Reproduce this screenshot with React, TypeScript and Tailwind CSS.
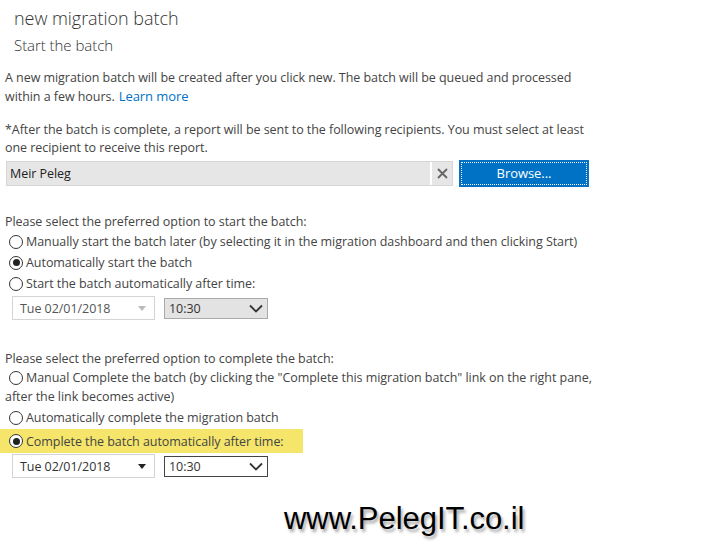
import React from "react"

function Radio({ checked }: { checked?: boolean }) {
  return (
    <span className="mr-[3px] inline-flex h-[14px] w-[14px] shrink-0 items-center justify-center rounded-full border border-[#333] bg-white">
      {checked && <span className="h-[7px] w-[7px] rounded-full bg-[#222]" />}
    </span>
  )
}

function Chevron() {
  return (
    <svg width="14" height="9" viewBox="0 0 14 9" fill="none">
      <path d="M1 1.5 L7 7.5 L13 1.5" stroke="#333" strokeWidth="1.8" />
    </svg>
  )
}

function DateTimeRow({ enabled }: { enabled?: boolean }) {
  return (
    <div className="flex items-center gap-[9px] pl-[12px]">
      <div className="flex h-[24px] w-[143px] items-center justify-between border border-[#d4d4d4] bg-white pl-[7px] pr-[8px]">
        <span className={enabled ? "text-[#333]" : "text-[#555]"}>Tue 02/01/2018</span>
        <svg width="8" height="5" viewBox="0 0 8 5">
          <path d="M0 0 L8 0 L4 5 Z" fill={enabled ? "#222" : "#bbb"} />
        </svg>
      </div>
      <div
        className={
          enabled
            ? "flex h-[21px] w-[104px] items-center justify-between border border-[#444] bg-white pl-[4px] pr-[4px]"
            : "flex h-[21px] w-[104px] items-center justify-between border border-[#aaa] bg-[#e3e3e3] pl-[4px] pr-[4px]"
        }
      >
        <span className="text-[#333]">10:30</span>
        <Chevron />
      </div>
    </div>
  )
}

export default function App() {
  return (
    <div
      className="relative h-[549px] w-[703px] overflow-hidden bg-white text-[12.5px] leading-[19px] tracking-[-0.05px] text-[#444]"
      style={{ fontFamily: '"Open Sans", "Noto Sans", sans-serif' }}
    >
      <div className="pl-[14px] pt-[6px]">
        <h1 className="text-[18px] font-light leading-[24px] text-[#333]">new migration batch</h1>
        <h2 className="mt-[5px] text-[15px] font-light leading-[20px] text-[#333]">Start the batch</h2>
      </div>

      <div className="pl-[5px] pr-[100px]">
        <p className="mt-[13px]">
          A new migration batch will be created after you click new. The batch will be queued and processed within a few hours.
          <span className="ml-[4px] inline-block text-[13px] text-[#0072c6]">Learn more</span>
        </p>

        <p className="mt-[15px] leading-[18px]">
          *After the batch is complete, a report will be sent to the following recipients. You must select at least one recipient to receive this report.
        </p>
      </div>

      <div className="mt-[3px] flex items-center pl-[6px]">
        <div className="flex h-[25px] w-[447px] items-stretch border border-[#d6d6d6] bg-[#e6e6e6]">
          <span className="flex flex-1 items-center pl-[3px] text-[#222]">Meir Peleg</span>
          <span className="flex w-[22px] items-center justify-center border-l-2 border-white">
            <svg width="11" height="11" viewBox="0 0 11 11">
              <path d="M1 1 L10 10 M10 1 L1 10" stroke="#666" strokeWidth="1.8" />
            </svg>
          </span>
        </div>
        <button className="ml-[6px] flex h-[27px] w-[130px] items-center justify-center border border-[#0a6fc2] bg-[#0072c6] p-[1px] text-white">
          <span className="flex h-full w-full items-center justify-center border border-dotted border-white text-[13px]">
            Browse...
          </span>
        </button>
      </div>

      <div className="mt-[25px] pl-[5px]">
        <p>Please select the preferred option to start the batch:</p>
        <div className="flex items-center pl-[4px] leading-[21px]">
          <Radio />
          Manually start the batch later (by selecting it in the migration dashboard and then clicking Start)
        </div>
        <div className="flex items-center pl-[4px] leading-[21px]">
          <Radio checked />
          Automatically start the batch
        </div>
        <div className="flex items-center pl-[4px] leading-[21px]">
          <Radio />
          Start the batch automatically after time:
        </div>
      </div>
      <div className="mt-[2px]">
        <DateTimeRow />
      </div>

      <div className="mt-[29px] pl-[5px]">
        <p>Please select the preferred option to complete the batch:</p>
        <div className="leading-[19px]">
          <div className="flex items-center whitespace-nowrap pl-[4px]">
            <Radio />
            Manual Complete the batch (by clicking the "Complete this migration batch" link on the right pane,
          </div>
          <div>after the link becomes active)</div>
        </div>
        <div className="flex items-center pl-[4px] pt-[1px] leading-[21px]">
          <Radio />
          Automatically complete the migration batch
        </div>
      </div>
      <div className="mt-[1px] flex h-[24px] w-[303px] items-center bg-[#f5e56b] pl-[9px]">
        <Radio checked />
        <span className="text-[#444]">Complete the batch automatically after time:</span>
      </div>
      <div className="mt-[1px]">
        <DateTimeRow enabled />
      </div>

      <div
        className="absolute left-[284px] top-[509px] text-[31px] text-black"
        style={{ fontFamily: '"Liberation Sans", Arial, sans-serif', textShadow: "2px 3px 3px rgba(0,0,0,0.35)" }}
      >
        www.PelegIT.co.il
      </div>
    </div>
  )
}
